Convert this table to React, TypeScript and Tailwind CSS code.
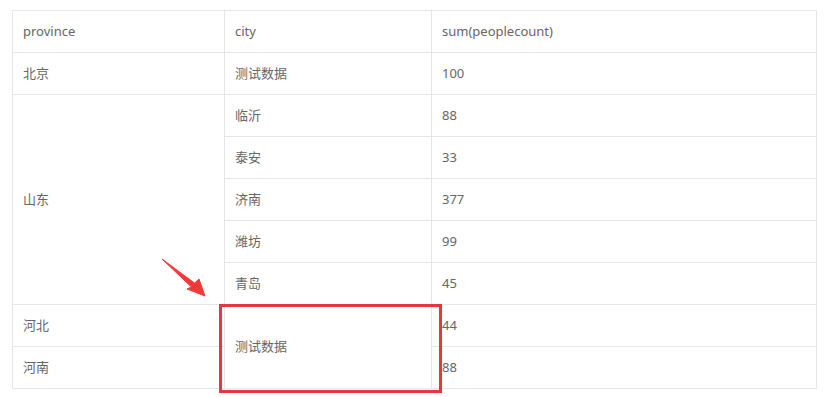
import React from "react"

type Row = {
  province?: { name: string; span: number }
  city?: { name: string; span: number }
  count: number
}

const rows: Row[] = [
  { province: { name: "北京", span: 1 }, city: { name: "测试数据", span: 1 }, count: 100 },
  { province: { name: "山东", span: 5 }, city: { name: "临沂", span: 1 }, count: 88 },
  { city: { name: "泰安", span: 1 }, count: 33 },
  { city: { name: "济南", span: 1 }, count: 377 },
  { city: { name: "潍坊", span: 1 }, count: 99 },
  { city: { name: "青岛", span: 1 }, count: 45 },
  { province: { name: "河北", span: 1 }, city: { name: "测试数据", span: 2 }, count: 44 },
  { province: { name: "河南", span: 1 }, count: 88 },
]

const cell = "h-[42px] border border-[#e6e6e6] px-[10px] py-0 text-left align-middle font-normal"

export default function App() {
  return (
    <div
      className="relative h-[397px] w-[825px] bg-white text-[13px] text-[#666]"
      style={{ fontFamily: '"Noto Sans", "Noto Sans CJK SC", sans-serif' }}
    >
      <div className="pl-[12px] pt-[10px]">
        <table className="w-[805px] table-fixed border-collapse">
          <colgroup>
            <col className="w-[212px]" />
            <col className="w-[207px]" />
            <col />
          </colgroup>
          <thead>
            <tr>
              <th className={cell}>province</th>
              <th className={cell}>city</th>
              <th className={cell}>sum(peoplecount)</th>
            </tr>
          </thead>
          <tbody>
            {rows.map((row, i) => (
              <tr key={i}>
                {row.province && (
                  <td rowSpan={row.province.span} className={cell}>
                    {row.province.name}
                  </td>
                )}
                {row.city && (
                  <td rowSpan={row.city.span} className={cell}>
                    {row.city.name}
                  </td>
                )}
                <td className={cell}>{row.count}</td>
              </tr>
            ))}
          </tbody>
        </table>
      </div>

      {/* highlight around the merged cell */}
      <div className="pointer-events-none absolute left-[219px] top-[304px] h-[89px] w-[223px] border-[3px] border-[#e8363c]" />

      {/* pointer arrow, tapered tail */}
      <svg
        className="pointer-events-none absolute left-[158px] top-[255px]"
        width="54"
        height="48"
        viewBox="0 0 54 48"
      >
        <polygon
          points="4,4 36.6,28.1 41,24 47,41 29,34 33.4,31.9"
          fill="#f03a3a"
          stroke="#f03a3a"
          strokeWidth="1"
          strokeLinejoin="round"
        />
      </svg>
    </div>
  )
}
